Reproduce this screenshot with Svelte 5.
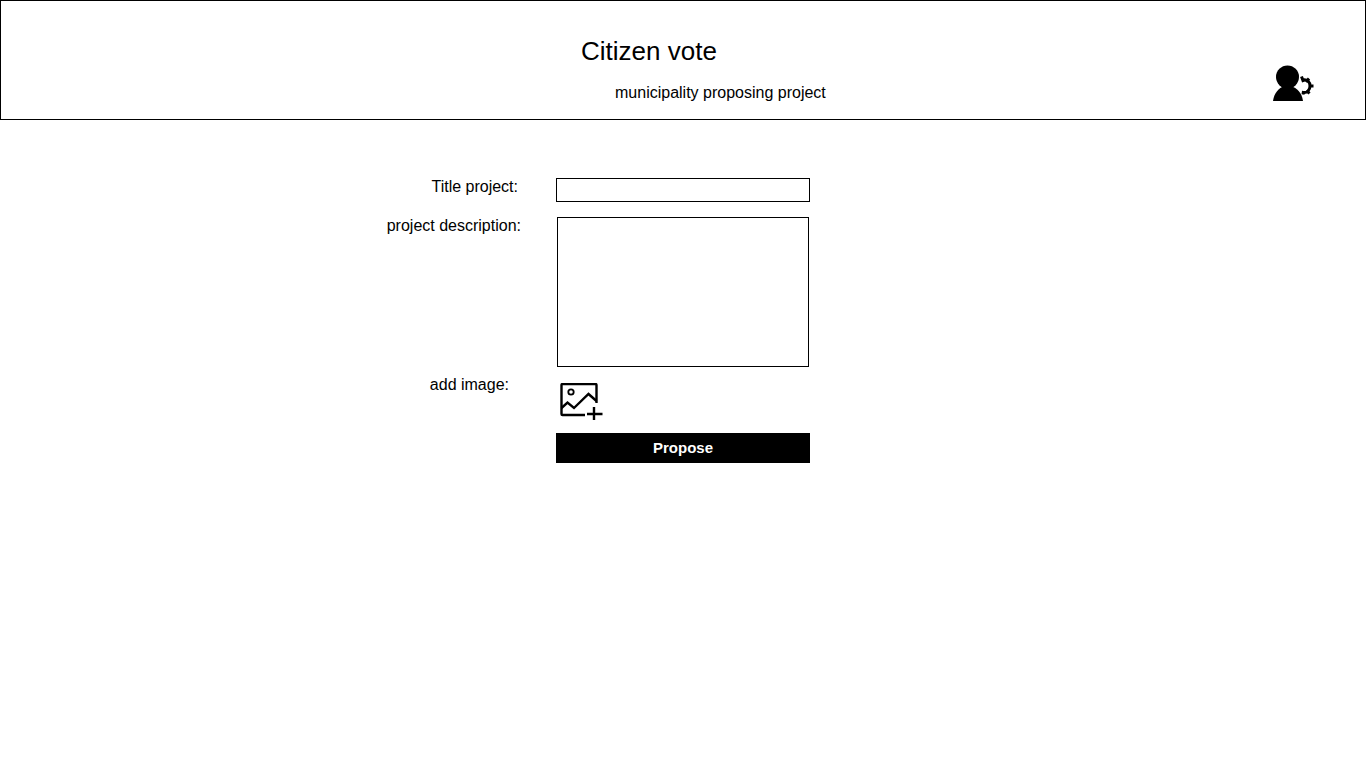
<script>
  let title = '';
  let description = '';
</script>

<header class="topbar">
  <div class="brand">
    <h1>Citizen vote</h1>
    <p>municipality proposing project</p>
  </div>
  <svg class="admin-icon" width="44" height="38" viewBox="0 0 44 38" aria-label="admin">
    <circle cx="15.5" cy="13" r="11.5" fill="#000" />
    <path d="M1 37 C2 29 7 24 12 22 L19 22 C25 24 30 29 31 37 Z" fill="#000" />
    <path d="M30.500 16 C35.500 15 38 18 38 22 C38 26 35 29 31.500 28.500" fill="none" stroke="#000" stroke-width="3" />
    <path d="M29.500 12.500 L31.500 18 M37 14.500 L34 18 M41.500 22 L37 22 M37.500 29.500 L34.500 26.500 M31 30.500 L31.500 27" stroke="#000" stroke-width="3" />
  </svg>
</header>

<form class="form" on:submit|preventDefault>
  <label class="label title-label" for="title">Title project:</label>
  <input id="title" class="title-input" type="text" bind:value={title} />

  <label class="label desc-label" for="description">project description:</label>
  <textarea id="description" bind:value={description}></textarea>

  <span class="label image-label">add image:</span>
  <svg class="image-icon" width="44" height="38" viewBox="0 0 44 38" aria-label="add image">
    <path d="M25 32 H2.500 Q1.500 32 1.500 31 V2 Q1.500 1 2.500 1 H35.500 Q36.500 1 36.500 2 V20" fill="none" stroke="#000" stroke-width="2.400" />
    <circle cx="11" cy="9" r="2.700" fill="none" stroke="#000" stroke-width="1.800" />
    <path d="M1.500 25 L7.500 19.500 L14 25 L28.500 11 L36.500 18" fill="none" stroke="#000" stroke-width="2.400" />
    <path d="M34 24 V37 M27 31 H42.500" fill="none" stroke="#000" stroke-width="2.400" />
  </svg>

  <span></span>
  <button type="submit">Propose</button>
</form>

<style>
  :global(body) {
    background: #fff;
    color: #000;
    font-family: "Liberation Sans", Arial, sans-serif;
  }

  .topbar {
    display: flex;
    justify-content: space-between;
    align-items: flex-end;
    box-sizing: border-box;
    height: 120px;
    border: 1px solid #000;
    padding: 0 49px 17px 580px;
  }

  h1 {
    margin: 0;
    font-size: 26px;
    font-weight: 400;
    line-height: 30px;
  }

  .brand p {
    margin: 18px 0 0 34px;
    font-size: 16px;
    line-height: 18px;
  }

  .admin-icon {
    display: block;
  }

  .form {
    display: grid;
    grid-template-columns: 556px 254px;
    margin-top: 58px;
  }

  .label {
    font-size: 16px;
    line-height: 18px;
    text-align: right;
  }

  .title-label {
    padding-right: 38px;
  }

  .desc-label {
    padding-right: 35px;
  }

  .image-label {
    padding-right: 47px;
  }

  .title-input {
    box-sizing: border-box;
    width: 254px;
    height: 24px;
    margin: 0 0 15px;
    border: 1px solid #000;
    border-radius: 0;
    padding: 0 4px;
    outline: none;
  }

  textarea {
    display: block;
    box-sizing: border-box;
    width: 252px;
    height: 150px;
    margin: 0 1px 9px;
    border: 1px solid #000;
    border-radius: 0;
    padding: 4px;
    resize: none;
    outline: none;
  }

  .image-icon {
    display: block;
    margin: 7px 0 12px 4px;
  }

  button {
    height: 30px;
    border: 0;
    border-radius: 0;
    padding: 0 0 2px;
    background: #000;
    color: #fff;
    font-family: inherit;
    font-size: 15px;
    font-weight: 700;
  }
</style>
